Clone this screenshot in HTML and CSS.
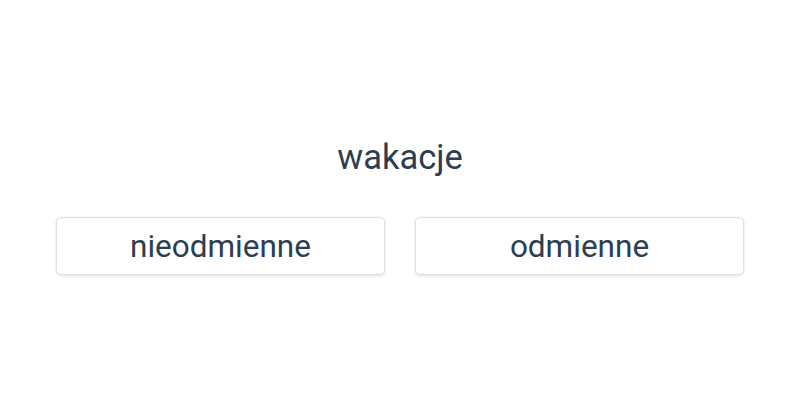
FILE: index.html
```html
<!DOCTYPE html>
<html lang="pl">
<head>
  <meta charset="UTF-8" />
  <meta name="viewport" content="width=device-width, initial-scale=1.0"/>
  <title>Odmiana</title>
  <link rel="stylesheet" href="styles.css">
</head>
<body>

  <div class="quiz">
    <h2 class="word">wakacje</h2>
    <div class="answers">
      <button class="answer">nieodmienne</button>
      <button class="answer">odmienne</button>
    </div>
  </div>

</body>
</html>
```

FILE: styles.css
```css
html, body {
  margin: 0;
  height: 100%;
}
body {
  font-family: Roboto, "Liberation Sans", sans-serif;
  background: #fff;
  color: #2c3e50;
  display: flex;
  align-items: center;
  justify-content: center;
}
.quiz {
  width: 100%;
  padding: 0 56px 0 56px;
  box-sizing: border-box;
  margin-top: 12px;
}
.word {
  text-align: center;
  font-size: 34.5px;
  font-weight: normal;
  line-height: 40px;
  margin: 0 0 40px;
  color: #2c3e50;
}
.answers {
  display: grid;
  grid-template-columns: 1fr 1fr;
  gap: 30px;
}
.answer {
  height: 58px;
  background: #fff;
  border: 1px solid #e0e0e0;
  border-radius: 5px;
  box-shadow: 0 1px 3px rgba(0, 0, 0, 0.12);
  font-family: inherit;
  font-size: 31.5px;
  color: #2c3e50;
  padding: 0;
}
```
